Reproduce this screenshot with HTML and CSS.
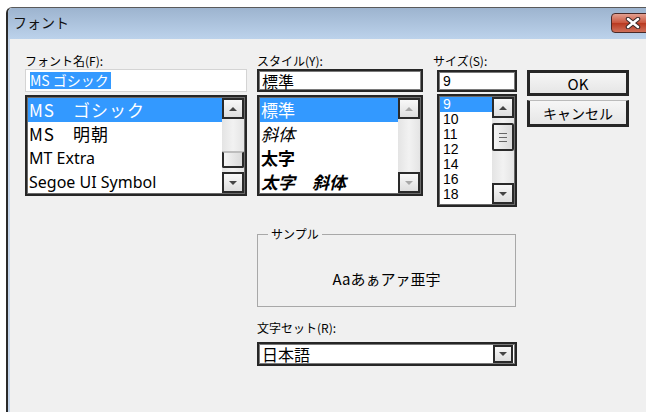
FILE: index.html
```html
<!DOCTYPE html>
<html lang="ja">
<head>
    <meta charset="utf-8">
    <title>フォント</title>
    <link rel="stylesheet" href="styles.css">
</head>
<body>
<div class="window">
    <div class="titlebar">
        <span class="title">フォント</span>
        <div class="close">
            <svg width="18" height="12" viewBox="0 0 18 12">
                <path d="M4 2 L14 10 M14 2 L4 10" stroke="#3a2a2a" stroke-width="4.5" stroke-linecap="round"/>
                <path d="M4 2 L14 10 M14 2 L4 10" stroke="#fff" stroke-width="2.5" stroke-linecap="round"/>
            </svg>
        </div>
    </div>
    <div class="client">
        <div class="top">
            <div class="col col-name">
                <div class="label">フォント名(F):</div>
                <div class="edit edit-plain"><span class="sel">MS ゴシック</span></div>
                <div class="listbox">
                    <div class="items">
                        <div class="item big mono selected">MS　ゴシック</div>
                        <div class="item big mono">MS　明朝</div>
                        <div class="item big latin">MT Extra</div>
                        <div class="item big latin">Segoe UI Symbol</div>
                    </div>
                    <div class="vscroll">
                        <div class="sbtn"><span class="tri-up"></span></div>
                        <div class="track track-name"><div class="thumb thumb-name"></div></div>
                        <div class="sbtn"><span class="tri-down"></span></div>
                    </div>
                </div>
            </div>

            <div class="col col-style">
                <div class="label">スタイル(Y):</div>
                <div class="edit edit-dark">標準</div>
                <div class="listbox">
                    <div class="items">
                        <div class="item big selected">標準</div>
                        <div class="item big italic">斜体</div>
                        <div class="item big bold">太字</div>
                        <div class="item big bold italic">太字　斜体</div>
                    </div>
                    <div class="vscroll">
                        <div class="sbtn"><span class="tri-up faded"></span></div>
                        <div class="track"></div>
                        <div class="sbtn"><span class="tri-down faded"></span></div>
                    </div>
                </div>
            </div>

            <div class="col col-size">
                <div class="label label-size">サイズ(S):</div>
                <div class="edit edit-dark edit-size">9</div>
                <div class="listbox listbox-size">
                    <div class="items">
                        <div class="item small selected">9</div>
                        <div class="item small">10</div>
                        <div class="item small">11</div>
                        <div class="item small">12</div>
                        <div class="item small">14</div>
                        <div class="item small">16</div>
                        <div class="item small">18</div>
                    </div>
                    <div class="vscroll">
                        <div class="sbtn"><span class="tri-up"></span></div>
                        <div class="track track-size"><div class="thumb thumb-size"><span class="grip"></span></div></div>
                        <div class="sbtn"><span class="tri-down"></span></div>
                    </div>
                </div>
            </div>

            <div class="col col-buttons">
                <button class="btn btn-default">OK</button>
                <button class="btn btn-cancel">キャンセル</button>
            </div>
        </div>

        <div class="bottom">
            <fieldset class="sample">
                <legend>サンプル</legend>
                <div class="sample-text">Aaあぁアァ亜宇</div>
            </fieldset>
            <div class="label label-charset">文字セット(R):</div>
            <div class="combo">
                <span>日本語</span>
                <div class="dropbtn"><span class="tri-down"></span></div>
            </div>
        </div>
    </div>
</div>
</body>
</html>
```

FILE: styles.css
```css
body {
  margin: 0;
  background: #fff;
  overflow: hidden;
  font-family: "Noto Sans CJK JP", sans-serif;
  font-size: 12px;
  color: #000;
}
.window {
  margin: 7px 0 0 6px;
  width: 654px;
  height: 420px;
  border-top: 1px solid #5a5a5a;
  border-left: 2px solid #2a2a2a;
  border-top-left-radius: 6px;
  overflow: hidden;
  display: flex;
  flex-direction: column;
}
.titlebar {
  height: 31px;
  flex: none;
  display: flex;
  align-items: flex-start;
  padding-left: 5px;
  background: linear-gradient(#9db4cf, #bcd2eb);
}
.title {
  font-size: 14px;
  line-height: 28px;
  color: #111;
}
.close {
  margin: 5px 8px 0 auto;
  width: 43px;
  height: 20px;
  box-sizing: border-box;
  border: 1px solid #4a2a28;
  border-radius: 4px;
  background: linear-gradient(#e3a090, #c9543c 50%, #b8381f 51%, #d0705a);
  display: flex;
  align-items: center;
  justify-content: center;
}
.client {
  flex: 1;
  background: #f0f0f0;
  border-left: 2px solid #c4d5ea;
  padding: 15px 0 0 15px;
}
.top {
  display: flex;
  align-items: flex-start;
}
.col {
  display: flex;
  flex-direction: column;
}
.col-name {
  width: 222px;
  margin-right: 10px;
}
.col-style {
  width: 166px;
  margin-right: 14px;
}
.col-size {
  width: 80px;
  margin-right: 10px;
}
.col-buttons {
  width: 102px;
  padding-top: 16px;
}
.label {
  line-height: 14px;
  height: 14px;
  margin-bottom: 1px;
  white-space: nowrap;
}
.label-size {
  margin-left: -4px;
  margin-bottom: 2px;
}
.edit {
  height: 23px;
  box-sizing: border-box;
  background: #fff;
  display: flex;
  align-items: center;
  white-space: nowrap;
}
.edit-plain {
  border: 1px solid #d4d4d4;
  padding-left: 4px;
}
.sel {
  background: #3399ff;
  color: #fff;
  font-size: 14px;
  line-height: 17px;
  padding-right: 2px;
}
.edit-dark {
  border: 2px solid #262626;
  box-shadow: inset 0 0 0 1px #7a7a7a;
  padding-left: 3px;
  font-size: 16px;
}
.edit-size {
  height: 22px;
  font-family: "Liberation Sans", sans-serif;
  font-size: 14px;
  padding-left: 4px;
}
.listbox {
  margin-top: 3px;
  height: 101px;
  box-sizing: border-box;
  border: 2px solid #262626;
  box-shadow: inset 0 0 0 1px #6a6a6a;
  background: #fff;
  display: flex;
  padding: 1px 1px 1px 0;
}
.listbox-size {
  margin-top: 2px;
  height: 113px;
}
.items {
  flex: 1;
  overflow: hidden;
  padding-left: 1px;
}
.item {
  white-space: nowrap;
  padding-left: 1px;
}
.item.big {
  height: 24px;
  line-height: 24px;
  font-size: 17px;
}
.item.mono {
  letter-spacing: 1px;
}
.item.latin {
  font-family: "Noto Sans", sans-serif;
  font-size: 16px;
}
.item.small {
  height: 15px;
  line-height: 15px;
  font-family: "Liberation Sans", sans-serif;
  font-size: 14px;
  padding-left: 3px;
}
.item.italic {
  font-style: italic;
}
.item.bold {
  font-weight: bold;
}
.item.selected {
  background: #3399ff;
  color: #fff;
}
.vscroll {
  width: 22px;
  display: flex;
  flex-direction: column;
  background: #ececec;
}
.sbtn {
  height: 21px;
  box-sizing: border-box;
  border: 2px solid #2a2a2a;
  background: linear-gradient(#f8f8f8, #dedede);
  display: flex;
  align-items: center;
  justify-content: center;
}
.track {
  flex: 1;
  display: flex;
  flex-direction: column;
  background: linear-gradient(90deg, #e4e4e4, #f2f2f2 50%, #e4e4e4);
}
.track-name {
  padding-top: 32px;
}
.track-size {
  padding-top: 5px;
}
.thumb {
  box-sizing: border-box;
  border: 2px solid #2a2a2a;
  border-radius: 2px;
  background: linear-gradient(90deg, #f4f4f4, #dadada);
  display: flex;
  align-items: center;
  justify-content: center;
}
.thumb-name {
  height: 17px;
  border-top-color: #bdbdbd;
}
.thumb-size {
  height: 28px;
}
.grip {
  width: 8px;
  height: 7px;
  border-top: 1px solid #666;
  border-bottom: 1px solid #666;
  position: relative;
}
.grip::after {
  content: "";
  position: absolute;
  left: 0;
  right: 0;
  top: 3px;
  border-top: 1px solid #666;
}
.tri-up {
  width: 0;
  height: 0;
  border-left: 4px solid transparent;
  border-right: 4px solid transparent;
  border-bottom: 4px solid #444;
}
.tri-down {
  width: 0;
  height: 0;
  border-left: 4px solid transparent;
  border-right: 4px solid transparent;
  border-top: 4px solid #444;
}
.tri-up.faded {
  border-bottom-color: #a8a8a8;
}
.tri-down.faded {
  border-top-color: #a8a8a8;
}
.btn {
  width: 102px;
  box-sizing: border-box;
  background: linear-gradient(#f6f6f6, #e6e6e6);
  font-family: "Noto Sans CJK JP", sans-serif;
  color: #000;
  padding: 0;
}
.btn-default {
  height: 26px;
  border: 3px solid #262626;
  font-size: 15px;
  margin-bottom: 4px;
}
.btn-cancel {
  height: 27px;
  border: 3px solid #262626;
  border-top: 1px solid #bbb;
  font-size: 14px;
}
.bottom {
  margin: 20px 0 0 232px;
  width: 260px;
}
.sample {
  margin: 0;
  padding: 0;
  width: 259px;
  box-sizing: border-box;
  border: 1px solid #a8a8a8;
}
.sample legend {
  margin-left: 10px;
  padding: 0 3px;
  line-height: 14px;
  font-size: 12px;
}
.sample-text {
  height: 65px;
  box-sizing: border-box;
  padding-top: 9px;
  display: flex;
  align-items: center;
  justify-content: center;
  font-size: 15px;
}
.label-charset {
  margin-top: 14px;
  margin-bottom: 7px;
}
.combo {
  height: 24px;
  box-sizing: border-box;
  border: 2px solid #262626;
  box-shadow: inset 0 0 0 1px #7a7a7a;
  background: #fff;
  display: flex;
  align-items: center;
  justify-content: space-between;
  padding: 0 2px 0 3px;
  font-size: 16px;
}
.dropbtn {
  width: 20px;
  height: 18px;
  box-sizing: border-box;
  border: 2px solid #2a2a2a;
  background: linear-gradient(#f8f8f8, #dedede);
  display: flex;
  align-items: center;
  justify-content: center;
}
```
